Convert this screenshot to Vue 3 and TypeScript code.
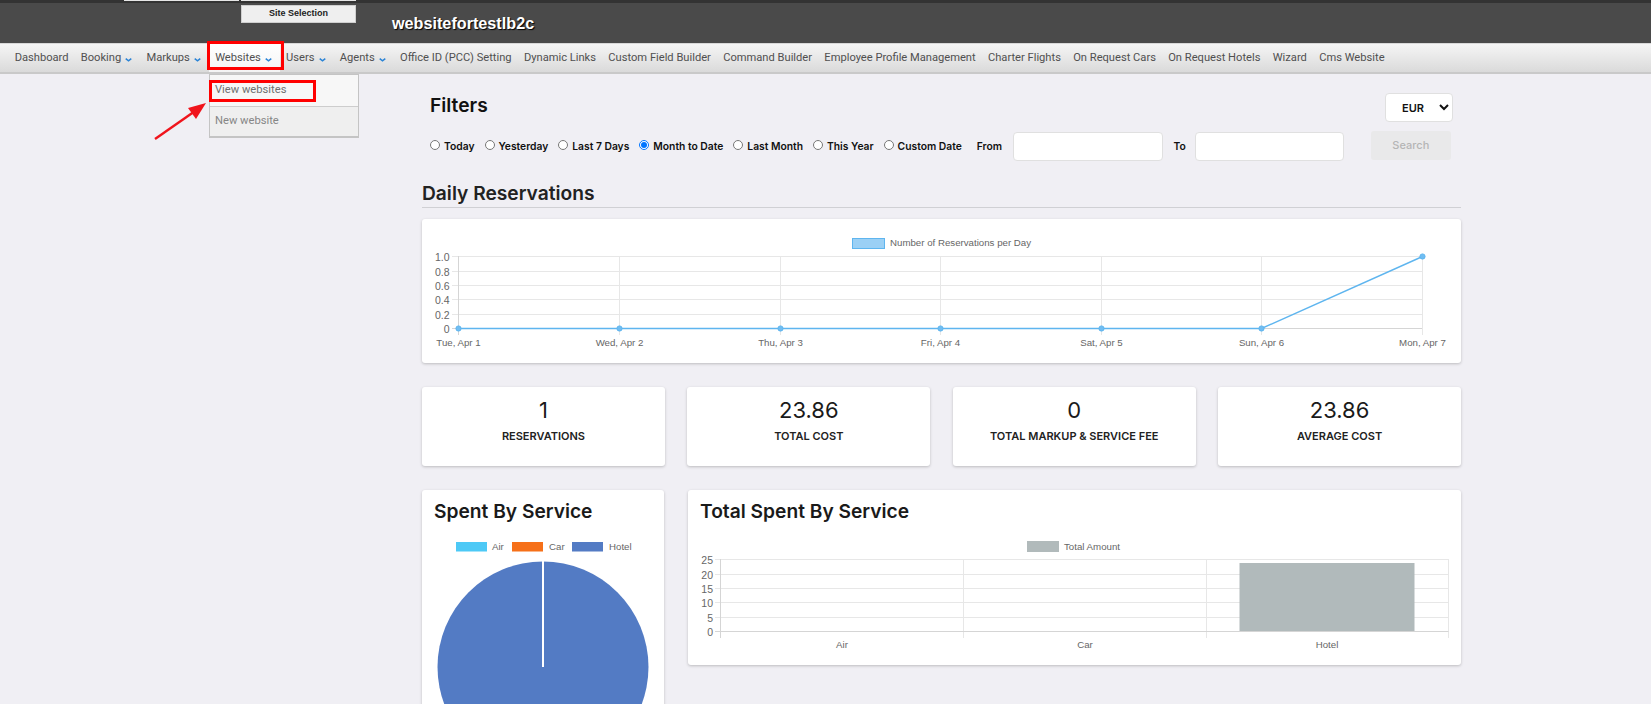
<script setup lang="ts">
interface NavItem { label: string; caret?: boolean; active?: boolean }
const navItems: NavItem[] = [
  { label: 'Dashboard' },
  { label: 'Booking', caret: true },
  { label: 'Markups', caret: true },
  { label: 'Websites', caret: true, active: true },
  { label: 'Users', caret: true },
  { label: 'Agents', caret: true },
  { label: 'Office ID (PCC) Setting' },
  { label: 'Dynamic Links' },
  { label: 'Custom Field Builder' },
  { label: 'Command Builder' },
  { label: 'Employee Profile Management' },
  { label: 'Charter Flights' },
  { label: 'On Request Cars' },
  { label: 'On Request Hotels' },
  { label: 'Wizard' },
  { label: 'Cms Website' }
]
const ranges = ['Today', 'Yesterday', 'Last 7 Days', 'Month to Date', 'Last Month', 'This Year', 'Custom Date']
const stats = [
  { value: '1', label: 'RESERVATIONS' },
  { value: '23.86', label: 'TOTAL COST' },
  { value: '0', label: 'TOTAL MARKUP & SERVICE FEE' },
  { value: '23.86', label: 'AVERAGE COST' }
]
// Line chart geometry, in card coordinates
const lineX = [36, 197, 358, 518, 679, 839, 1000]
const lineDays = ['Tue, Apr 1', 'Wed, Apr 2', 'Thu, Apr 3', 'Fri, Apr 4', 'Sat, Apr 5', 'Sun, Apr 6', 'Mon, Apr 7']
const lineTicks = [
  { y: 37.5, t: '1.0' }, { y: 52.5, t: '0.8' }, { y: 66.5, t: '0.6' },
  { y: 80.5, t: '0.4' }, { y: 95.5, t: '0.2' }, { y: 109.5, t: '0' }
]
const linePoints = lineX.map((x, i) => `${x + 0.5},${i === 6 ? 37.5 : 109.5}`).join(' ')
// Bar chart geometry
const barX = [33.5, 276.5, 519.5, 761.5]
const barTicks = [
  { y: 69.5, t: '25' }, { y: 84.5, t: '20' }, { y: 98.5, t: '15' },
  { y: 112.5, t: '10' }, { y: 127.5, t: '5' }, { y: 141.5, t: '0' }
]
const barCats = [{ x: 155, t: 'Air' }, { x: 398, t: 'Car' }, { x: 640, t: 'Hotel' }]
const pieLegend = [
  { x: 34, tx: 70, color: '#4dc9f6', t: 'Air' },
  { x: 90, tx: 127, color: '#f67019', t: 'Car' },
  { x: 150, tx: 187, color: '#537bc4', t: 'Hotel' }
]
</script>

<template>
  <div class="page">
    <header class="topbar">
      <div class="site-col">
        <div class="site-btn">Site Selection</div>
      </div>
      <div class="site-name">websitefortestlb2c</div>
      <span class="tab tab-a"></span>
      <span class="tab tab-b"></span>
    </header>

    <nav class="nav">
      <a v-for="item in navItems" :key="item.label" class="nav-item" :class="{ active: item.active }">
        {{ item.label }}
        <svg v-if="item.caret" class="caret" width="7" height="4" viewBox="0 0 7 4">
          <path d="M.7.7l2.8 2.2L6.3.7" fill="none" stroke="#2b84d6" stroke-width="1.5" />
        </svg>
      </a>
    </nav>

    <div class="dropdown">
      <div class="drop-item first">View websites</div>
      <div class="drop-item second">New website</div>
    </div>
    <div class="mark mark-nav"></div>
    <div class="mark mark-view"></div>
    <svg class="arrow" width="60" height="40" viewBox="0 0 60 40">
      <path d="M1 38L44 8" stroke="#f0141c" stroke-width="2.4" fill="none" />
      <path d="M52 2L34 7l8 11z" fill="#f0141c" />
    </svg>

    <main class="main">
      <section class="filters">
        <div class="filters-head">
          <h2 class="filters-title">Filters</h2>
          <select class="currency"><option>EUR</option></select>
        </div>
        <div class="filters-row">
          <label v-for="r in ranges" :key="r" class="radio">
            <input type="radio" name="range" :checked="r === 'Month to Date'" />
            <span>{{ r }}</span>
          </label>
          <span class="field-label from">From</span>
          <input class="date" type="text" />
          <span class="field-label to">To</span>
          <input class="date date-to" type="text" />
          <button class="search" type="button" disabled>Search</button>
        </div>
      </section>

      <h2 class="section-title">Daily Reservations</h2>

      <section class="card line-card">
        <svg width="1039" height="144" viewBox="0 0 1039 144" class="chart">
          <rect x="430.5" y="19.5" width="32" height="10" fill="#9bd0f5" stroke="#5eb5ef" />
          <text x="468" y="27" class="tick">Number of Reservations per Day</text>
          <line v-for="t in lineTicks" :key="t.t" x1="30" x2="1000" :y1="t.y" :y2="t.y" class="grid" />
          <line v-for="x in lineX" :key="x" :x1="x + 0.5" :x2="x + 0.5" y1="37" y2="116" class="grid" />
          <line x1="36.5" x2="36.5" y1="37" y2="116" class="axis" />
          <line x1="30" x2="1000" y1="109.5" y2="109.5" class="axis" />
          <text v-for="t in lineTicks" :key="'l' + t.t" x="27.5" :y="t.y + 4" text-anchor="end" class="tick lg">{{ t.t }}</text>
          <text v-for="(d, i) in lineDays" :key="d" :x="lineX[i] + 0.5" y="127" text-anchor="middle" class="tick">{{ d }}</text>
          <polyline :points="linePoints" fill="none" stroke="#5eb5ef" stroke-width="1.4" />
          <circle v-for="(x, i) in lineX" :key="'p' + x" :cx="x + 0.5" :cy="i === 6 ? 37.5 : 109.5" r="2.6" fill="#70bdf2" stroke="#5eb5ef" />
        </svg>
      </section>

      <section class="stats">
        <div v-for="(s, i) in stats" :key="i" class="card stat">
          <div class="stat-value">{{ s.value }}</div>
          <div class="stat-label">{{ s.label }}</div>
        </div>
      </section>

      <section class="bottom">
        <div class="card pie-card">
          <h3 class="card-title">Spent By Service</h3>
          <svg width="242" height="180" viewBox="0 0 242 180" class="chart">
            <g v-for="l in pieLegend" :key="l.t">
              <rect :x="l.x" y="9" width="31" height="9.5" :fill="l.color" />
              <text :x="l.tx" y="17" class="tick">{{ l.t }}</text>
            </g>
            <circle cx="121" cy="134" r="105.5" fill="#537bc4" />
            <line x1="121" x2="121" y1="28" y2="134" stroke="#fff" stroke-width="2" />
          </svg>
        </div>
        <div class="card bar-card">
          <h3 class="card-title">Total Spent By Service</h3>
          <svg width="773" height="124" viewBox="1 0 773 124" class="chart bar-svg">
            <rect x="340" y="0" width="32" height="11" fill="#b1babb" />
            <text x="377" y="9" class="tick">Total Amount</text>
            <g transform="translate(0,-51)">
              <line v-for="t in barTicks" :key="t.t" x1="28" x2="761.5" :y1="t.y" :y2="t.y" class="grid" />
              <line v-for="x in barX" :key="x" :x1="x" :x2="x" y1="69" y2="148" class="grid" />
              <line x1="33.5" x2="33.5" y1="69" y2="148" class="axis" />
              <line x1="28" x2="761.5" y1="141.5" y2="141.5" class="axis" />
              <rect x="552.5" y="73" width="175" height="68" fill="#b1babb" />
              <text v-for="t in barTicks" :key="'b' + t.t" x="26" :y="t.y + 4" text-anchor="end" class="tick lg">{{ t.t }}</text>
              <text v-for="c in barCats" :key="c.t" :x="c.x" y="158" text-anchor="middle" class="tick">{{ c.t }}</text>
            </g>
          </svg>
        </div>
      </section>
    </main>
  </div>
</template>

<style>
html, body { margin: 0; overflow: hidden; background: #f0eff4; }
</style>

<style scoped>
.page {
  position: relative;
  height: 704px;
  overflow: hidden;
  background: #f0eff4;
  font-family: Inter, "Liberation Sans", sans-serif;
  color: #1a1a1a;
}
.topbar {
  position: relative;
  display: flex;
  height: 40px;
  border-top: 3px solid #333;
  background: #4a4a4a;
}
.site-col { width: 392px; padding: 2px 0 0 241px; box-sizing: border-box; }
.site-btn {
  width: 115px;
  height: 18px;
  box-sizing: border-box;
  border: 1px solid #cfcfcf;
  background: #efefef;
  color: #222;
  font: bold 9px/14px "Liberation Sans", sans-serif;
  text-align: center;
}
.site-name {
  padding-top: 10px;
  color: #fff;
  font: bold 16.2px/20px "Liberation Sans", sans-serif;
  text-shadow: 1px 1px 1px #000;
}
.tab { position: absolute; top: -3px; height: 1px; background: #e6e6e6; }
.tab-a { left: 124px; width: 115px; }
.tab-b { left: 241px; width: 115px; }
.nav {
  display: flex;
  align-items: center;
  height: 31px;
  box-sizing: border-box;
  padding-left: 8.5px;
  border-top: 1px solid #d8d8d8;
  border-bottom: 2px solid #c9c9c9;
  background: linear-gradient(#f5f5f5, #dadada);
}
.nav-item {
  display: flex;
  align-items: center;
  gap: 4px;
  height: 100%;
  box-sizing: border-box;
  padding: 0 6.15px 2px;
  color: #505050;
  font: 11.15px "Roboto", "Liberation Sans", sans-serif;
  white-space: nowrap;
}
.nav-item.active { background: linear-gradient(#fff, #f4f4f4); }
.caret { margin: 5px 2px 0 0; }
.dropdown {
  position: absolute;
  left: 209px;
  top: 74px;
  width: 150px;
  height: 64px;
  box-sizing: border-box;
  border: 1px solid #c4c4c4;
  border-bottom-width: 2px;
  background: #efefef;
  font: 11.2px "Roboto", "Liberation Sans", sans-serif;
  color: #868686;
}
.drop-item { height: 31px; padding-left: 5px; }
.drop-item.first { line-height: 30px; background: #f7f7f7; border-bottom: 1px solid #cdcdcd; color: #6f6f6f; }
.drop-item.second { line-height: 28px; }
.mark { position: absolute; box-sizing: border-box; border: 3px solid #f00; }
.mark-nav { left: 207px; top: 41px; width: 77px; height: 29px; }
.mark-view { left: 209px; top: 80px; width: 107px; height: 22px; }
.arrow { position: absolute; left: 154px; top: 101px; }
.main { margin-left: 422px; width: 1039px; }
.filters { padding: 19px 8px 0; height: 106px; box-sizing: border-box; }
.filters-head { display: flex; justify-content: space-between; align-items: flex-start; }
.filters-title { margin: 0; font-size: 19.2px; line-height: 24px; font-weight: 600; color: #111; }
.currency {
  width: 68px;
  height: 29px;
  border: 1px solid #e0e0e0;
  border-radius: 4px;
  background: #fff;
  font: 600 11px Inter, sans-serif;
  text-align: center;
  color: #111;
}
.filters-row { display: flex; align-items: center; height: 30px; margin-top: 9px; white-space: nowrap; }
.radio { display: flex; flex: none; align-items: center; margin-right: 10px; font-size: 10.3px; font-weight: 600; color: #111; }
.radio input { width: 10px; height: 10px; margin: 0 4px 2px 0; }
.field-label { flex: none; font-size: 10.3px; font-weight: 600; color: #111; }
.from { margin: 0 10.5px 0 5px; }
.to { margin: 0 9px 0 11px; }
.date {
  flex: none;
  width: 150px;
  height: 29px;
  box-sizing: border-box;
  padding: 0;
  border: 1px solid #e0e0e0;
  border-radius: 4px;
  background: #fff;
}
.date-to { width: 149px; }
.search {
  flex: none;
  width: 80px;
  height: 29px;
  margin: -2px 0 0 27px;
  border: none;
  border-radius: 3px;
  background: #e9e9ea;
  color: #b5b5b5;
  font: 500 11px Inter, sans-serif;
}
.section-title {
  margin: 0;
  height: 26px;
  padding-top: 1px;
  border-bottom: 1px solid #d0d0d4;
  font-size: 19.2px;
  line-height: 24px;
  font-weight: 600;
  color: #222;
}
.card {
  background: #fff;
  border-radius: 3px;
  box-shadow: 0 1px 3px rgba(0, 0, 0, 0.22);
}
.line-card { height: 144px; margin-top: 11px; }
.chart { display: block; }
.grid { stroke: #e7e7e7; stroke-width: 1; }
.axis { stroke: #d5d5d5; stroke-width: 1; }
.tick { font: 9.7px "Liberation Sans", sans-serif; fill: #666; }
.tick.lg { font-size: 10.5px; }
.stats { display: grid; grid-template-columns: repeat(4, 1fr); gap: 22.5px; margin-top: 24px; }
.stat { height: 79px; text-align: center; box-sizing: border-box; padding-top: 10px; }
.stat-value { font-size: 22px; line-height: 27px; color: #1a1a1a; }
.stat-label { margin-top: 5px; font-size: 11px; line-height: 14px; font-weight: 600; color: #222; }
.bottom { display: flex; gap: 24px; align-items: flex-start; margin-top: 24px; }
.pie-card { width: 242px; height: 260px; flex: none; }
.bar-card { flex: 1; height: 175px; }
.card-title { margin: 0; padding: 9px 12px 0; height: 43px; box-sizing: border-box; font-size: 19.2px; line-height: 24px; font-weight: 600; color: #1a1a1a; }
.bar-svg { margin-top: 8px; }
</style>
